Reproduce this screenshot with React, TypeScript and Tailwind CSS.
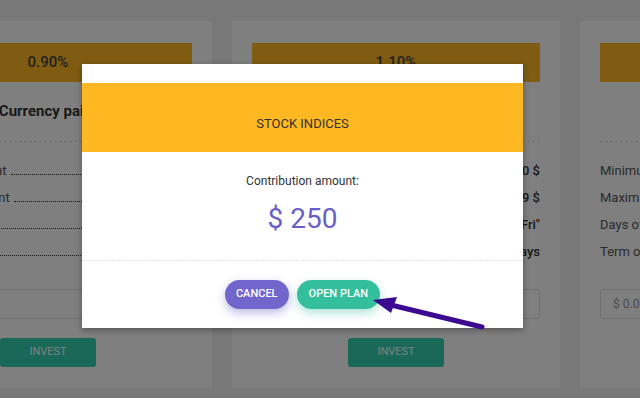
import React from "react";

type Plan = {
  rate: string;
  title: string;
  rows: [string, string][];
};

const plans: Plan[] = [
  {
    rate: "0.90%",
    title: "Currency pairs",
    rows: [
      ["Minimum amount", "10 $"],
      ["Maximum amount", "5000 $"],
      ["Days of accrual", "\"Mon-Fri\""],
      ["Term of deposit", "30 days"],
    ],
  },
  {
    rate: "1.10%",
    title: "Stock indices",
    rows: [
      ["Minimum amount", "100 $"],
      ["Maximum amount", "9999 $"],
      ["Days of accrual", "\"Mon-Fri\""],
      ["Term of deposit", "45 days"],
    ],
  },
  {
    rate: "1.30%",
    title: "Commodities",
    rows: [
      ["Minimum amount", "500 $"],
      ["Maximum amount", "19999 $"],
      ["Days of accrual", "\"Mon-Fri\""],
      ["Term of deposit", "60 days"],
    ],
  },
];

function PlanCard({ plan }: { plan: Plan }) {
  return (
    <div className="w-[328px] shrink-0 bg-white px-5 pt-[22px] pb-[21px] flex flex-col">
      <div className="h-[39px] bg-[#ffb822] flex items-center justify-center text-[15px] font-medium text-[#444]">
        {plan.rate}
      </div>
      <div className="mt-[19px] text-center text-[15px] leading-[20px] font-bold text-[#333]">
        {plan.title}
      </div>
      <div className="mt-[20px] border-t border-dashed border-[#ddd]" />
      <div className="mt-[15px] flex flex-col">
        {plan.rows.map(([label, value]) => (
          <div key={label} className="h-[27px] flex items-center text-[13px] text-[#555]">
            <span className="whitespace-nowrap">{label}</span>
            <div className="flex-1 mx-1 mt-[7px] border-b border-dotted border-[#333]" />
            <span className="whitespace-nowrap font-medium text-[#333]">{value}</span>
          </div>
        ))}
      </div>
      <div className="mt-[24px] h-[30px] border border-[#ddd] rounded-[3px] flex items-center px-3 text-[12px] text-[#999]">
        $ 0.00
      </div>
      <button className="mt-[19px] self-center h-[29px] w-[96px] rounded-[3px] bg-[#35d0ae] text-[11px] text-white">
        INVEST
      </button>
    </div>
  );
}

export default function App() {
  return (
    <div
      className="relative w-[640px] h-[398px] overflow-hidden bg-[#f0f0f0]"
      style={{ fontFamily: "Roboto, 'Liberation Sans', sans-serif" }}
    >
      <div className="flex gap-5 pt-[21px] ml-[-116px]">
        {plans.map((p) => (
          <PlanCard key={p.title} plan={p} />
        ))}
      </div>

      <div className="absolute inset-0 bg-black/50" />

      <div className="absolute left-[82px] top-[64px] w-[441px] bg-white shadow-[0_2px_6px_rgba(0,0,0,0.35)]">
        <div className="h-[19px]" />
        <div className="h-[69px] bg-[#ffb822] flex justify-center pt-[33px] text-[13px] leading-[16px] text-[#333]">
          STOCK INDICES
        </div>
        <div className="h-[108px] flex flex-col items-center pt-[21px]">
          <div className="text-[12px] leading-[16px] text-[#333]">Contribution amount:</div>
          <div className="mt-[14px] text-[28px] leading-[32px] text-[#6a5fc7]">$ 250</div>
        </div>
        <div className="border-t border-dashed border-[#e3e3e3] pt-[19px] pb-[19px] flex justify-center gap-2">
          <button className="h-[29px] px-[11px] rounded-full bg-[#7266cc] text-[11px] font-medium text-white shadow-[0_4px_10px_rgba(114,102,204,0.45)]">
            CANCEL
          </button>
          <button className="h-[29px] px-[12px] rounded-full bg-[#34bf9c] text-[11px] font-medium text-white shadow-[0_4px_10px_rgba(52,191,156,0.4)]">
            OPEN PLAN
          </button>
        </div>
      </div>

      <svg className="absolute inset-0" width="640" height="398" viewBox="0 0 640 398">
        <line x1="391" y1="305" x2="482" y2="327" stroke="#3c0a91" strokeWidth="5" strokeLinecap="round" />
        <polygon points="373,300 397,297 391,313" fill="#3c0a91" />
      </svg>
    </div>
  );
}
